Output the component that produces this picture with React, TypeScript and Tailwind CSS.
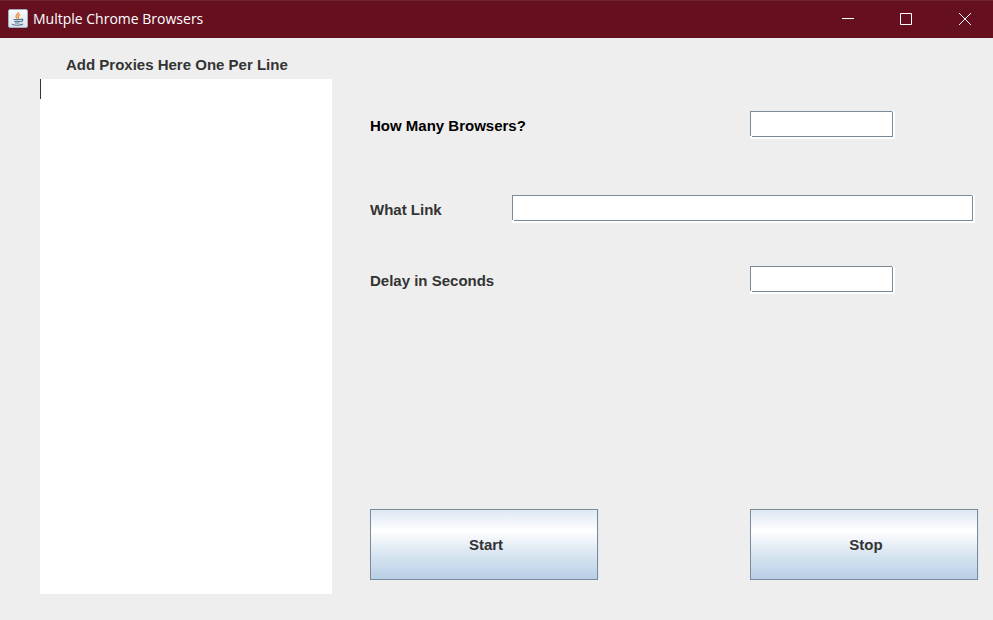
import type { ReactNode } from "react";

function JavaIcon() {
  return (
    <svg width="20" height="20" viewBox="0 0 20 20" aria-hidden="true">
      <defs>
        <linearGradient id="tile" x1="0" y1="0" x2="0" y2="1">
          <stop offset="0" stopColor="#fbfcfd" />
          <stop offset="1" stopColor="#dce3e8" />
        </linearGradient>
      </defs>
      <rect x="0.5" y="0.5" width="19" height="18" rx="1.5" fill="url(#tile)" stroke="#9fb0bd" />
      <path d="M10.6 3c.6 1.8-3.2 2.600-2.600 4.500.2.8 1 1.300 1.300 2M12.200 5.500c-1.500.6-2.400 1.300-1.800 2.300.5.8.4 1.300-.3 1.900" fill="none" stroke="#e98a35" strokeWidth="1.300" />
      <path d="M5.500 10.500h7.500M6.300 12.300h6M7 14h4.500M13 10.300c2.500-.6 2.400 1.900-.4 2.400M4 15.200c2.500 1.500 8.500 1.300 11-.2" fill="none" stroke="#55799a" strokeWidth="1.200" />
    </svg>
  );
}

function WindowButton({ label, children }: { label: string; children: ReactNode }) {
  return (
    <button type="button" aria-label={label} className="flex h-full w-[58px] items-center justify-center">
      <svg width="14" height="14" viewBox="0 0 14 14" fill="none" stroke="#fff" aria-hidden="true">
        {children}
      </svg>
    </button>
  );
}

function TextField({ id, className }: { id: string; className: string }) {
  return (
    <span
      className={`relative block h-[26px] shadow-[0_2px_0_#fff,1px_2px_0_#fff,2px_2px_0_#fff,2px_1px_0_#fff] before:absolute before:top-0 before:right-0 before:size-px before:bg-[#eeeeee] after:absolute after:bottom-0 after:left-0 after:h-px after:w-0.5 after:bg-white ${className}`}
    >
      <input
        id={id}
        type="text"
        className="block h-full w-full border border-[#7a8a99] bg-white px-1 outline-none"
      />
    </span>
  );
}

function MetalButton({ className, children }: { className: string; children: ReactNode }) {
  return (
    <button
      type="button"
      className={`h-[71px] border border-[#7a8a99] bg-linear-[180deg,#dde8f3_0%,#ffffff_30%,#dde8f3_60%,#b8cfe5_100%] pl-1 font-bold shadow-[1px_0_0_#dde8f3] ${className}`}
    >
      {children}
    </button>
  );
}

export default function App() {
  return (
    <div className="flex min-h-screen flex-col bg-[#eeeeee] font-['Liberation_Sans',Arial,sans-serif] text-[15px] leading-5 font-bold text-[#333333]">
      <header className="flex h-[38px] items-center bg-[#650f1f] pl-2 text-white shadow-[inset_0_1px_0_#702331]">
        <JavaIcon />
        <h1 className="flex-1 pl-[5px] font-['Open_Sans','Noto_Sans',sans-serif] text-[14px] font-normal">
          Multple Chrome Browsers
        </h1>
        <WindowButton label="Minimize">
          <path d="M1 6.500h12" />
        </WindowButton>
        <WindowButton label="Maximize">
          <path d="M1.500 1.500h11v11h-11z" />
        </WindowButton>
        <WindowButton label="Close">
          <path d="M2 1l12 12M14 1L2 13" />
        </WindowButton>
      </header>

      <main className="flex flex-1 gap-[38px] pr-[15px] pl-10">
        <section className="flex w-[292px] flex-col pt-[17px] pb-[26px]">
          <label htmlFor="proxies" className="pb-1 pl-[26px]">
            Add Proxies Here One Per Line
          </label>
          <textarea
            id="proxies"
            autoFocus
            className="block w-full flex-1 resize-none bg-white bg-linear-[#333333,#333333] bg-size-[1px_20px] bg-no-repeat font-normal caret-transparent outline-none"
          />
        </section>

        <section className="flex flex-1 flex-col pt-[73px] pb-10">
          <div className="grid grid-cols-8">
            <label htmlFor="count" className="col-span-5 pt-[5px] text-black">
              How Many Browsers?
            </label>
            <TextField id="count" className="w-[143px]" />
          </div>
          <div className="mt-[58px] flex pr-[5px]">
            <label htmlFor="link" className="w-[142px] pt-[5px]">
              What Link
            </label>
            <TextField id="link" className="flex-1" />
          </div>
          <div className="mt-[45px] grid grid-cols-8">
            <label htmlFor="delay" className="col-span-5 pt-[5px]">
              Delay in Seconds
            </label>
            <TextField id="delay" className="w-[143px]" />
          </div>
          <div className="mt-auto grid grid-cols-8">
            <MetalButton className="col-span-3">Start</MetalButton>
            <MetalButton className="col-span-3 col-start-6">Stop</MetalButton>
          </div>
        </section>
      </main>
    </div>
  );
}
